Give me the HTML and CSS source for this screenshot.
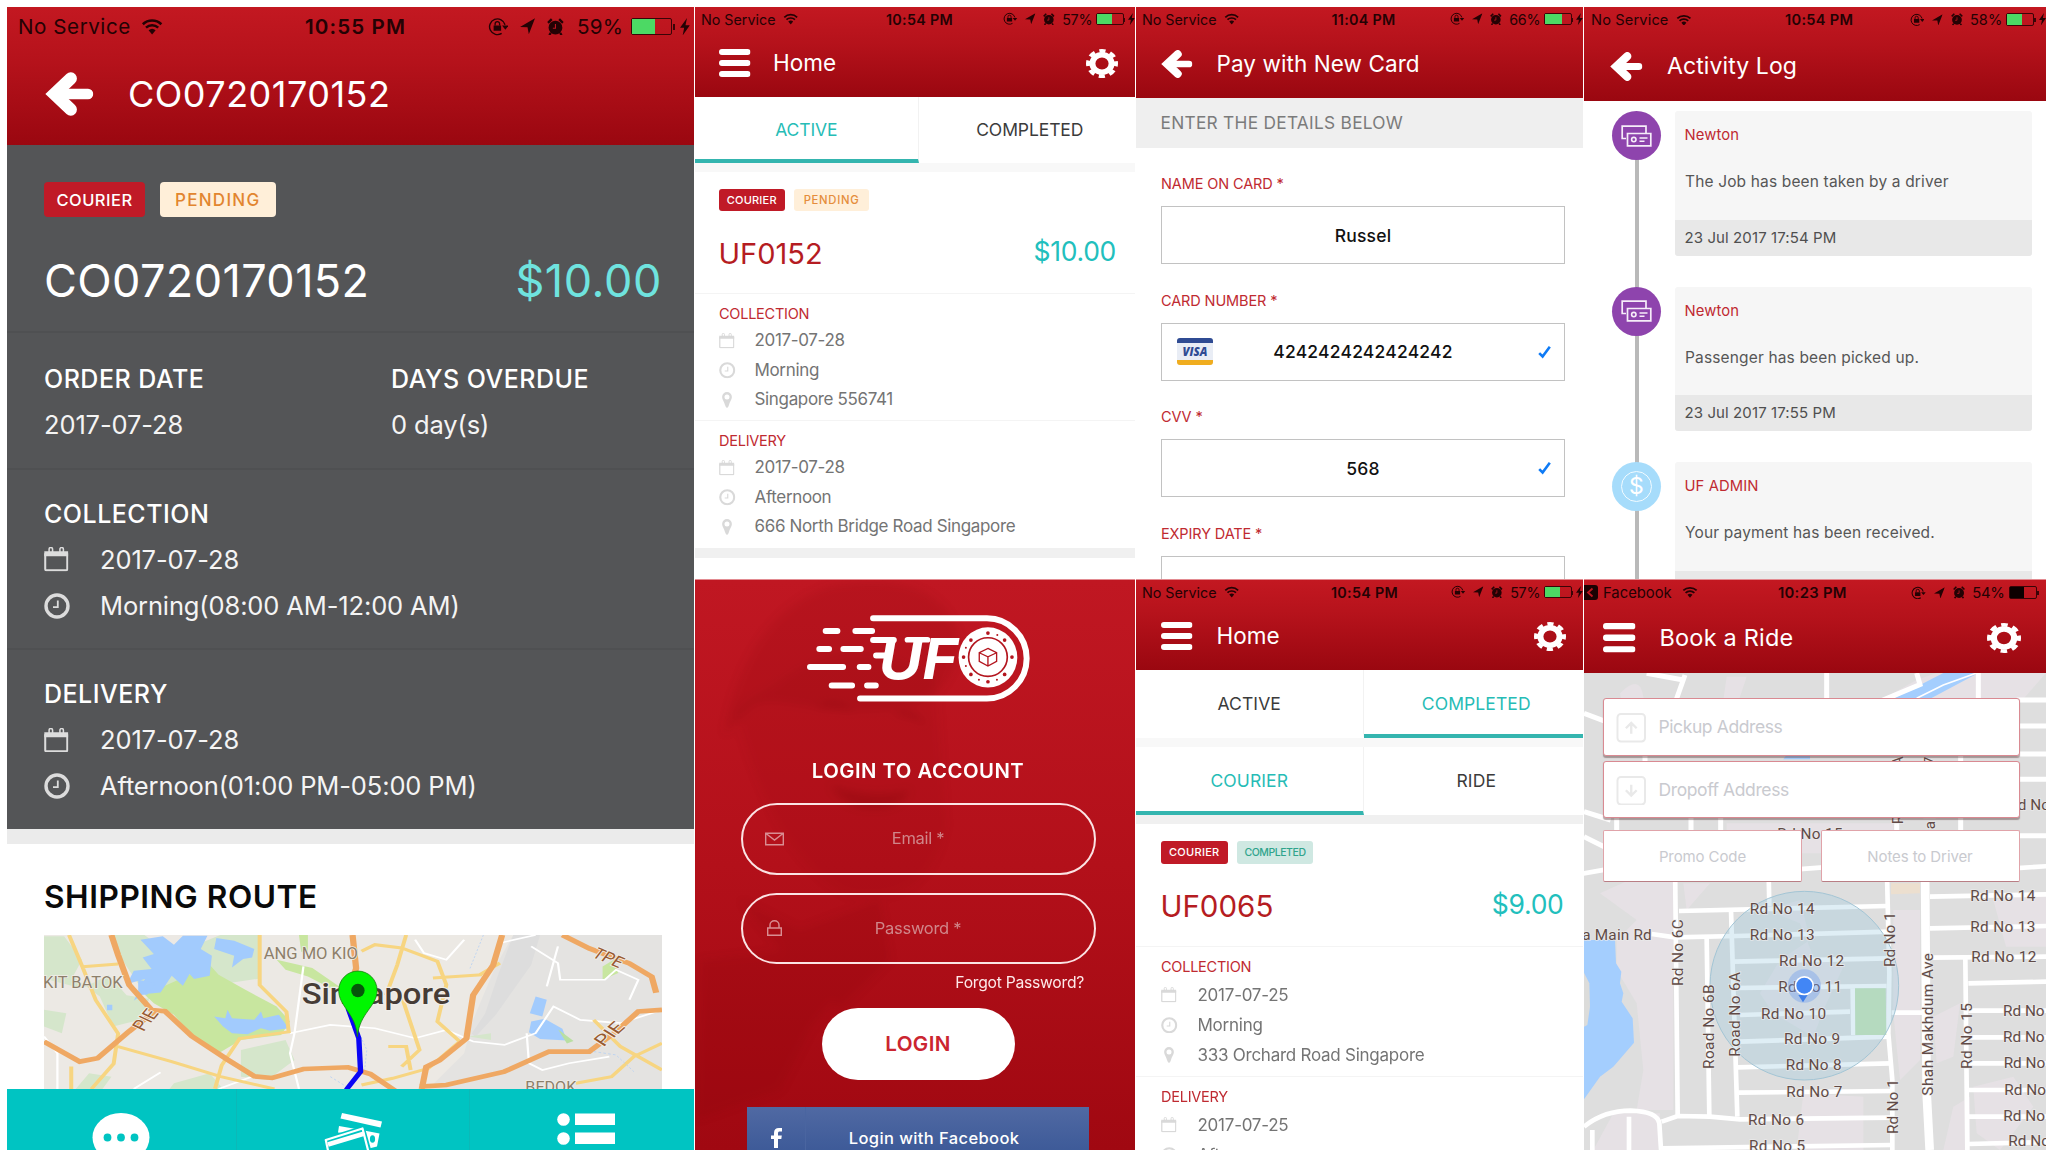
FILE: index.html
```html
<!DOCTYPE html>
<html lang="en">
<head>
<meta charset="utf-8">
<title>UFO Courier</title>
<link rel="stylesheet" href="styles.css">
</head>
<body>
<svg class="sprite" aria-hidden="true">
  <symbol id="wifi" viewBox="0 0 24 18"><path d="M2 6.6a14.5 14.5 0 0 1 20 0M5.4 10.3a9.6 9.6 0 0 1 13.2 0" fill="none" stroke="currentColor" stroke-width="2.7"/><path d="M8.2 13.2a5.6 5.6 0 0 1 7.6 0L12 17.6z" fill="currentColor"/></symbol>
  <symbol id="rotlock" viewBox="0 0 22 20"><path d="M14.6 17.4A8.4 8.4 0 1 1 18.2 8.2" fill="none" stroke="currentColor" stroke-width="1.5"/><path d="M15 9h7l-3.5 4.4z" fill="currentColor"/><path d="M6 9h8v5.6H6z" fill="currentColor"/><path d="M7.6 9V7.2a2.4 2.4 0 0 1 4.8 0V9" fill="none" stroke="currentColor" stroke-width="1.4"/></symbol>
  <symbol id="nav" viewBox="0 0 16 17"><path d="M0 9.4 16 0 9.4 17 8 9.6z" fill="currentColor"/></symbol>
  <symbol id="alarm" viewBox="0 0 18 19"><circle cx="9" cy="10.4" r="7.4" fill="currentColor"/><path d="M1 5.2 5 1.2M17 5.2l-4-4M4 16l-1.6 2.4M14 16l1.6 2.4" stroke="currentColor" stroke-width="2.4"/><path d="M9 6.500v4.500H6.200" fill="none" stroke="#bd1620" stroke-width="1.200"/></symbol>
  <symbol id="bolt" viewBox="0 0 9 16"><path d="M6.4 0 0 9h3.8L2.4 16 9 6.6H5z" fill="currentColor"/></symbol>
  <symbol id="back" viewBox="0 0 49 44" preserveAspectRatio="none"><path d="M26 6.5 9.5 22 26 37.5" fill="none" stroke="currentColor" stroke-width="12.5" stroke-linecap="round"/><path d="M12 22h31.5" stroke="currentColor" stroke-width="10.5" stroke-linecap="round"/></symbol>
  <symbol id="menu" viewBox="0 0 32 28" preserveAspectRatio="none"><path d="M3 3h26M3 14h26M3 25h26" stroke="currentColor" stroke-width="6" stroke-linecap="round"/></symbol>
  <symbol id="gear" viewBox="0 0 32 32" preserveAspectRatio="none"><circle cx="16" cy="16" r="9.6" fill="none" stroke="currentColor" stroke-width="6"/><circle cx="16" cy="16" r="14" fill="none" stroke="currentColor" stroke-width="4" stroke-dasharray="6.2 4.796" stroke-dashoffset="3.1"/></symbol>
  <symbol id="cal" viewBox="0 0 24 24"><path d="M1.2 6v15.8a1 1 0 0 0 1 1h19.6a1 1 0 0 0 1-1V6" fill="none" stroke="currentColor" stroke-width="2"/><path d="M.3 4.2h23.400V9H.3z" fill="currentColor"/><path d="M5 5.500V2.200a1.700 1.700 0 0 1 3.400 0V5.500M15.600 5.500V2.200a1.700 1.700 0 0 1 3.400 0V5.500" fill="none" stroke="currentColor" stroke-width="1.500"/></symbol>
  <symbol id="clock" viewBox="0 0 26 26"><circle cx="13" cy="13" r="11" fill="none" stroke="currentColor" stroke-width="3.4"/><path d="M13.8 7.5v6.6H9" fill="none" stroke="currentColor" stroke-width="1.8"/></symbol>
  <symbol id="pin" viewBox="0 0 20 32"><path d="M10 0a9.7 9.7 0 0 0-9.7 9.8C.3 15 4 18 6 26q2 6 4 6t4-6c2-8 5.700-11 5.700-16.200A9.700 9.700 0 0 0 10 0zm0 5a5 5 0 1 1 0 10 5 5 0 0 1 0-10z" fill="currentColor" fill-rule="evenodd"/></symbol>
  <symbol id="check" viewBox="0 0 13 13"><path d="M1.200 7.600 4.600 11 11.800 1.200" fill="none" stroke="#0f7bf5" stroke-width="2.600"/></symbol>
  <symbol id="cash" viewBox="0 0 31 22"><path d="M5 13.500H1.200V1.200H25V8" fill="none" stroke="currentColor" stroke-width="1.700"/><path d="M6.500 8.500h23.300v12.300H6.500z" fill="none" stroke="currentColor" stroke-width="1.700"/><circle cx="12.800" cy="14.600" r="2.200" fill="none" stroke="currentColor" stroke-width="1.600"/><path d="M18.500 13h8M18.500 16.300h5" stroke="currentColor" stroke-width="1.500"/></symbol>
</svg>

<main class="board">

  <section class="screen detail">
    <header class="bar">
      <div class="status">
        <div class="status-left"><span>No Service</span><svg class="i-wifi"><use href="#wifi"/></svg></div>
        <b>10:55 PM</b>
        <div class="status-right"><svg class="i-rot"><use href="#rotlock"/></svg><svg class="i-nav"><use href="#nav"/></svg><svg class="i-alarm"><use href="#alarm"/></svg><span>59%</span><i class="battery"><i style="width:59%"></i></i><svg class="i-bolt"><use href="#bolt"/></svg></div>
      </div>
      <div class="titlebar"><svg class="lead"><use href="#back"/></svg><h1>CO0720170152</h1></div>
    </header>
    <div class="d-order">
      <div class="tags"><span class="tag red">COURIER</span><span class="tag pending">PENDING</span></div>
      <div class="idrow"><strong>CO0720170152</strong><em>$10.00</em></div>
    </div>
    <div class="d-dates">
      <div><h2>ORDER DATE</h2><p>2017-07-28</p></div>
      <div><h2>DAYS OVERDUE</h2><p>0 day(s)</p></div>
    </div>
    <div class="d-leg">
      <h2>COLLECTION</h2>
      <p><svg class="cal"><use href="#cal"/></svg>2017-07-28</p>
      <p><svg class="clk"><use href="#clock"/></svg>Morning(08:00 AM-12:00 AM)</p>
    </div>
    <div class="d-leg last">
      <h2>DELIVERY</h2>
      <p><svg class="cal"><use href="#cal"/></svg>2017-07-28</p>
      <p><svg class="clk"><use href="#clock"/></svg>Afternoon(01:00 PM-05:00 PM)</p>
    </div>
    <div class="d-route">
      <h2>SHIPPING ROUTE</h2>
      <svg class="routemap" viewBox="99 346 1384 461" preserveAspectRatio="none">
        <rect x="99" y="346" width="1384" height="461" fill="#ece9e4"/>
        <path d="M1150 346H1483V807H960L1040 700 1060 600 1110 440z" fill="#e4e3e1"/>
        <path d="M1150 346h60l-20 90-80 150-45 65-8-10 30-60 30-120z" fill="#dddddd"/>
        <g fill="#d5e6cb"><path d="M99 350h45l40 70-20 50 60 60 30 90 60-20 20-60-60-120-20-74h70l60 60 110-60h90v130l-100 20-110 50-90-20-40-60-60 40-85-30z"/><path d="M540 690l100-30 20 60-60 60-60-10zM390 790l80-30 30 47h-120zM99 570l50 10-10 60-40-20zM1050 650l50-10v20zM200 760l50 10-20 37h-60z"/></g>
        <path d="M325 525 400 480l70-45 20 30 60 45 70 50 30 45-20 40-90 15-50 40-50-40-50-75-45-35z" fill="#c8e69f"/>
        <path d="M620 420 700 445 760 500 740 505 690 470 640 450zM670 346h20v55l-15-5zM1350 440l25-20 10 40-35 20z" fill="#c8e69f"/>
        <g fill="#a2cbfd"><path d="M315 360l50-10 25 25 20-27h55l-15 40 25 20-5 60-35 10-10-15-15 35-25-30-25 50-40 5-20 20 25-65-40 15 15-40 40-5-20-35 25-10z"/><path d="M310 480l40 10-20 35-20 0z"/><path d="M485 355l40 8 45 25-5 25-20 5-25 25 5-35-45-20z"/><path d="M480 590l25 5 5-25 10 25 50 5 15-25 5 20 35-10 22 40-42 8-20-8-30 18-35-3-20-20z"/><path d="M1200 530l25 10-10 50-28-10zM1190 605l30-8 40 30 10 35-60-5-25-20zM240 555h12v16h-12z"/><path d="M1250 628l35 35-15 8z" fill="#b9dfa2"/></g>
        <g fill="none" stroke="#fff" stroke-width="5"><path d="M650 640 740 615 840 625 930 655 1000 630 1060 665 1130 675 1200 640 1240 560 1300 600 1390 610 1483 570M680 440l-20 200-10 60 20 107M930 360l20 40 50 20 40-60M1190 380l60 50 5 50h100l25-30 50 30-20 60M1180 640l5 90 30 20 60-20 90-20M99 650l30 50v107M300 807l60-50M490 807l80-40M1225 500l25-120M1120 370l80-24"/></g>
        <g fill="none" stroke="#f7d581" stroke-width="9"><path d="M155 346l30 95 30 100 50 100-10 90-50 76M185 441l80-8M582 346v150l60 80 5 60-110 20-40 80-15 70M265 680l120 45 110 45 120 37M910 346l-20 90-25 90M810 395l30-20 60 10 80 40 20 70-20 110 50 60-70 80-80 30-70 20M970 475l110-10M870 680h40l10 70M900 530l40 160-40 50M1330 600l60 80 93 70M1290 790l80-20 50-60 63-40M160 740v67M1120 430l-45 35"/></g>
        <g fill="none" stroke="#efa863" stroke-width="14"><path d="M250 346l15 60 25 90 50 75 30 3 60 75 80 70 60 50 40 5 70-27 100-5 50 20 55 50M99 665l80 60 40-10 70-80 60-63M790 346l8 100-20 80M1125 346l-20 90-45 90-15 130-60 65-30 20-10 66M940 800l60-5 130-40 100-60h90l60-60 50-60 53-5M1260 346l60 40 90 45 50 40 10 48"/></g>
        <g fill="none" stroke="#b4cff3" stroke-width="2" stroke-dasharray="6 5"><path d="M1083 346l-30 100M808 650l14 40-5 60M740 770l45 37M1330 695l50 10 40 50"/></g>
        <g font-family="Roboto, sans-serif" fill="#8d7f6a" stroke="#f0ede8" stroke-width="5" paint-order="stroke">
          <text x="591" y="417" font-size="48" textLength="211" lengthAdjust="spacingAndGlyphs">ANG MO KIO</text>
          <text x="97" y="504" font-size="48" textLength="178" lengthAdjust="spacingAndGlyphs">KIT BATOK</text>
          <text x="1177" y="817" font-size="46" textLength="114" lengthAdjust="spacingAndGlyphs">BEDOK</text>
          <g fill="#985a30"><text font-size="46" textLength="66" lengthAdjust="spacingAndGlyphs" transform="translate(322 636) rotate(-58)">PIE</text><text font-size="46" textLength="78" lengthAdjust="spacingAndGlyphs" transform="translate(1352 682) rotate(-50)">PIE</text><text font-size="46" textLength="72" lengthAdjust="spacingAndGlyphs" transform="translate(1324 410) rotate(30)">TPE</text></g>
          <text x="676" y="554" font-size="86" font-weight="500" textLength="333" lengthAdjust="spacingAndGlyphs" fill="#463c36" stroke-width="7">Singapore</text>
        </g>
        <path d="M780 565l24 90 4 100-32 54" fill="none" stroke="#0a05f5" stroke-width="12"/>
        <path d="M801 650c-4-70-42-90-42-138a43 58 0 0 1 86 0c0 48-40 68-44 138z" fill="#00f600" stroke="#1b7a12" stroke-width="2"/>
        <ellipse cx="802" cy="512" rx="15" ry="20" fill="#06560a"/>
      </svg>
    </div>
    <nav class="d-actions">
      <a><svg viewBox="0 0 58 48"><ellipse cx="29" cy="24.500" rx="28.500" ry="24.500" fill="#fff"/><g fill="#00c4c2"><circle cx="15.500" cy="24.500" r="3.900"/><circle cx="29" cy="24.500" r="3.900"/><circle cx="42.500" cy="24.500" r="3.900"/></g></svg></a>
      <a><svg viewBox="0 0 58 48"><path d="M18 0 58 8.500 56.500 14.500 16.500 5.500z" fill="#fff"/><path d="M15 13l20 3.500 20.500 4-2.500 13-8 2-10-14-21-2z" fill="#fff"/><ellipse cx="48.500" cy="26" rx="2.600" ry="3.800" fill="#00c4c2"/><path d="M1.500 27 38.500 15.500 46 42 7 52z" fill="#00c4c2" stroke="#00c4c2" stroke-width="5"/><path d="M1.800 27 38.500 15.500 45 41 7 52z" fill="#00c4c2" stroke="#fff" stroke-width="2.200" stroke-linejoin="round"/><path d="M4 31.500 40.500 20.500" stroke="#fff" stroke-width="4.500"/></svg></a>
      <a><svg viewBox="0 0 58 48"><g fill="#fff"><circle cx="6.500" cy="6.500" r="6.300"/><circle cx="6.500" cy="25.500" r="6.300"/><path d="M18 .500h40v11.500H18zM18 19.500h40V31H18z"/></g></svg></a>
    </nav>
  </section>

  <section class="screen home">
    <header class="bar">
      <div class="status">
        <div class="status-left"><span>No Service</span><svg class="i-wifi"><use href="#wifi"/></svg></div>
        <b>10:54 PM</b>
        <div class="status-right"><svg class="i-rot"><use href="#rotlock"/></svg><svg class="i-nav"><use href="#nav"/></svg><svg class="i-alarm"><use href="#alarm"/></svg><span>57%</span><i class="battery"><i style="width:57%"></i></i><svg class="i-bolt"><use href="#bolt"/></svg></div>
      </div>
      <div class="titlebar"><svg class="lead"><use href="#menu"/></svg><h1>Home</h1><svg class="cog"><use href="#gear"/></svg></div>
    </header>
    <div class="tabs"><a class="on">ACTIVE</a><a>COMPLETED</a></div>
    <div class="strip light"></div>
    <div class="tags"><span class="tag red">COURIER</span><span class="tag pending">PENDING</span></div>
    <div class="idrow"><strong>UF0152</strong><em>$10.00</em></div>
    <div class="leg">
      <h3>COLLECTION</h3>
      <p><svg class="cal"><use href="#cal"/></svg>2017-07-28</p>
      <p><svg class="clk"><use href="#clock"/></svg>Morning</p>
      <p><svg class="pin"><use href="#pin"/></svg>Singapore 556741</p>
    </div>
    <div class="leg">
      <h3>DELIVERY</h3>
      <p><svg class="cal"><use href="#cal"/></svg>2017-07-28</p>
      <p><svg class="clk"><use href="#clock"/></svg>Afternoon</p>
      <p><svg class="pin"><use href="#pin"/></svg>666 North Bridge Road Singapore</p>
    </div>
    <div class="strip"></div>
  </section>

  <section class="screen pay">
    <header class="bar">
      <div class="status">
        <div class="status-left"><span>No Service</span><svg class="i-wifi"><use href="#wifi"/></svg></div>
        <b>11:04 PM</b>
        <div class="status-right"><svg class="i-rot"><use href="#rotlock"/></svg><svg class="i-nav"><use href="#nav"/></svg><svg class="i-alarm"><use href="#alarm"/></svg><span>66%</span><i class="battery"><i style="width:66%"></i></i><svg class="i-bolt"><use href="#bolt"/></svg></div>
      </div>
      <div class="titlebar"><svg class="lead"><use href="#back"/></svg><h1>Pay with New Card</h1></div>
    </header>
    <div class="intro">ENTER THE DETAILS BELOW</div>
    <div class="form">
      <label>NAME ON CARD *</label>
      <div class="field"><span>Russel</span></div>
      <label>CARD NUMBER *</label>
      <div class="field">
        <svg class="visa" viewBox="0 0 36 27"><rect width="36" height="27" rx="3" fill="#e9edf5"/><path d="M0 5V3a3 3 0 0 1 3-3h30a3 3 0 0 1 3 3v2z" fill="#2f4b93"/><path d="M0 22v2a3 3 0 0 0 3 3h30a3 3 0 0 0 3-3v-2z" fill="#f0ad1f"/><text x="5.500" y="17.800" font-size="12" font-weight="800" font-style="italic" font-family="Open Sans, sans-serif" fill="#2f4b93" textLength="25" lengthAdjust="spacingAndGlyphs">VISA</text></svg>
        <span>4242424242424242</span><svg class="ok"><use href="#check"/></svg>
      </div>
      <label>CVV *</label>
      <div class="field"><span>568</span><svg class="ok"><use href="#check"/></svg></div>
      <label>EXPIRY DATE *</label>
      <div class="field"></div>
    </div>
  </section>

  <section class="screen log">
    <header class="bar">
      <div class="status">
        <div class="status-left"><span>No Service</span><svg class="i-wifi"><use href="#wifi"/></svg></div>
        <b>10:54 PM</b>
        <div class="status-right"><svg class="i-rot"><use href="#rotlock"/></svg><svg class="i-nav"><use href="#nav"/></svg><svg class="i-alarm"><use href="#alarm"/></svg><span>58%</span><i class="battery"><i style="width:58%"></i></i><svg class="i-bolt"><use href="#bolt"/></svg></div>
      </div>
      <div class="titlebar"><svg class="lead"><use href="#back"/></svg><h1>Activity Log</h1></div>
    </header>
    <div class="timeline">
      <article><div class="dot"><svg><use href="#cash"/></svg></div><div class="entry"><h3>Newton</h3><p>The Job has been taken by a driver</p><footer>23 Jul 2017 17:54 PM</footer></div></article>
      <article><div class="dot"><svg><use href="#cash"/></svg></div><div class="entry"><h3>Newton</h3><p>Passenger has been picked up.</p><footer>23 Jul 2017 17:55 PM</footer></div></article>
      <article><div class="dot blue"><span>$</span></div><div class="entry"><h3>UF ADMIN</h3><p>Your payment has been received.</p><footer></footer></div></article>
    </div>
  </section>

  <section class="screen login">
    <svg class="backdrop" viewBox="695 580 440 570" preserveAspectRatio="none">
      <defs><filter id="soft"><feGaussianBlur stdDeviation="4"/></filter></defs>
      <g filter="url(#soft)" fill="#6e0008">
        <path d="M724 735c10-60 40-130 110-150 60-10 110 0 125 50 0 40-20 70-70 75-80 8-120-20-140 0z" opacity=".10"/>
        <path d="M726 735c10-40 30-35 60-60 60-40 110-20 150 0l10 150c-10 60-50 80-100 70-60-30-90-110-110-180z" opacity=".07"/>
        <path d="M815 708q20-14 40 4-20-7-40-4zM892 715q20-12 36 12-16-12-36-12zM830 785q40 15 80 5-10 20-40 18-25 0-40-23z" opacity=".22"/>
        <path d="M700 960l90-10 60 30-40 50-30 60-85 30zM740 900l60 30 80-30 10 60-50 50-60-60z" opacity=".10"/>
      </g>
    </svg>
    <svg class="logo" viewBox="351 120 668 262">
      <g fill="none" stroke="#fff" stroke-width="18" stroke-linecap="round"><path d="M549 130H890A119 120 0 0 1 890 370H510"/><path d="M407 168h35M496 168h50M388 222h29M460 222h52M360 276h99M509 276h26M425 331h61M531 331h26M549 195h62M558 241h30"/></g>
      <text x="566" y="311" font-family="Inter, sans-serif" font-weight="700" font-style="italic" font-size="170" fill="#fff" textLength="236" lengthAdjust="spacingAndGlyphs">UF</text>
      <path d="M652 194h60" stroke="#fff" stroke-width="17" stroke-linecap="round"/>
      <ellipse cx="893" cy="247" rx="88" ry="90" fill="#fff"/>
      <g fill="none" stroke="#b3151e"><circle cx="893" cy="246" r="58" stroke-width="5"/><path d="M893 220l26 13v26l-26 14-26-14v-26zM867 233l26 12 26-12M893 245v28" stroke-width="4"/></g>
      <g fill="#b3151e"><circle cx="893" cy="174" r="5.500"/><circle cx="893" cy="320" r="5.500"/><circle cx="820" cy="246" r="5.500"/><circle cx="965" cy="246" r="5.500"/><circle cx="842" cy="195" r="5.500"/><circle cx="943" cy="195" r="5.500"/><circle cx="842" cy="298" r="5.500"/><circle cx="943" cy="298" r="5.500"/><circle cx="921" cy="180" r="3"/><circle cx="827" cy="218" r="3"/><circle cx="827" cy="273" r="3"/><circle cx="866" cy="314" r="3"/><circle cx="920" cy="314" r="3"/></g>
    </svg>
    <h2>LOGIN TO ACCOUNT</h2>
    <div class="pill"><svg viewBox="0 0 19 13"><path d="M.700.700h17.600v11.600H.700zM.700.700l8.800 6.800L18.300.700" fill="none" stroke="currentColor" stroke-width="1.400"/></svg><span>Email *</span></div>
    <div class="pill"><svg viewBox="-2 0 19 16"><path d="M.700 8h13.600v7.200H.700zM3 8V5a4.500 4.300 0 0 1 9 0v3" fill="none" stroke="currentColor" stroke-width="1.400"/></svg><span>Password *</span></div>
    <a class="forgot">Forgot Password?</a>
    <a class="submit">LOGIN</a>
    <a class="fb"><svg viewBox="0 0 11 20"><path d="M3 20V11H0V7.500h3V5C3 1.800 4.800 0 7.800 0H11v3.500H8.800c-1.300 0-1.800.6-1.800 1.700v2.300h3.800L10.300 11H7v9z" fill="#fff"/></svg><span>Login with Facebook</span></a>
  </section>

  <section class="screen home done">
    <header class="bar">
      <div class="status">
        <div class="status-left"><span>No Service</span><svg class="i-wifi"><use href="#wifi"/></svg></div>
        <b>10:54 PM</b>
        <div class="status-right"><svg class="i-rot"><use href="#rotlock"/></svg><svg class="i-nav"><use href="#nav"/></svg><svg class="i-alarm"><use href="#alarm"/></svg><span>57%</span><i class="battery"><i style="width:57%"></i></i><svg class="i-bolt"><use href="#bolt"/></svg></div>
      </div>
      <div class="titlebar"><svg class="lead"><use href="#menu"/></svg><h1>Home</h1><svg class="cog"><use href="#gear"/></svg></div>
    </header>
    <div class="tabs"><a>ACTIVE</a><a class="on">COMPLETED</a></div>
    <div class="strip light"></div>
    <div class="tabs"><a class="on">COURIER</a><a>RIDE</a></div>
    <div class="strip"></div>
    <div class="tags"><span class="tag red">COURIER</span><span class="tag completed">COMPLETED</span></div>
    <div class="idrow"><strong>UF0065</strong><em>$9.00</em></div>
    <div class="leg">
      <h3>COLLECTION</h3>
      <p><svg class="cal"><use href="#cal"/></svg>2017-07-25</p>
      <p><svg class="clk"><use href="#clock"/></svg>Morning</p>
      <p><svg class="pin"><use href="#pin"/></svg>333 Orchard Road Singapore</p>
    </div>
    <div class="leg">
      <h3>DELIVERY</h3>
      <p><svg class="cal"><use href="#cal"/></svg>2017-07-25</p>
      <p><svg class="clk"><use href="#clock"/></svg>Afternoon</p>
    </div>
  </section>

  <section class="screen ride">
    <header class="bar">
      <div class="status">
        <div class="status-left"><svg class="chip" viewBox="0 0 14 15"><path d="M0 0h11a3 3 0 0 1 3 3v9a3 3 0 0 1-3 3H0z" fill="#1a0203"/><path d="M8.500 3.500 4 7.500l4.500 4" fill="none" stroke="#bd1620" stroke-width="1.800"/></svg><span>Facebook</span><svg class="i-wifi"><use href="#wifi"/></svg></div>
        <b>10:23 PM</b>
        <div class="status-right"><svg class="i-rot"><use href="#rotlock"/></svg><svg class="i-nav"><use href="#nav"/></svg><svg class="i-alarm"><use href="#alarm"/></svg><span>54%</span><i class="battery plain"><i style="width:54%"></i></i></div>
      </div>
      <div class="titlebar"><svg class="lead"><use href="#menu"/></svg><h1>Book a Ride</h1><svg class="cog"><use href="#gear"/></svg></div>
    </header>
    <div class="mapwrap">
      <svg class="citymap" viewBox="12 -561 1386 1431" preserveAspectRatio="none">
        <rect x="12" y="-561" width="1386" height="1431" fill="#dedede"/>
        <g fill="#e6e1e5"><path d="M170 50h110v700H170l20-120-20-200-60-100V240L170 180 60 100zM310 70h80l-70 80zM560 150l100-30 30 120-90 60-60 100 40 60 120 70 30-80 60-130-90-30-40-100zM670 700l180 10v160H650zM940 150h80v450l-60 60-20-200zM1240 120l158-20v160h-120zM1180 680l120-30 60 90-100 130-70-50zM1060 470l80-40-20 160-50 20zM1120 740l50-30v160h-80zM120 -500q60-60 70 10t-60 50zM440 -550h60l-30 90-40-20zM920 -490l90-50 60-21h328l-70 80H920zM440 -110h500v90H440zM100 760h140l-5 110H40z"/></g>
        <path d="M12 240h93l3 70 16 25-4 35 10 30-5 25 33 50 4 73-62 72-40 30-48 68z" fill="#a4cefe"/>
        <path d="M12 338l16 32 2 70-8 55-10 5z" fill="#dcdcda"/>
        <path d="M940-484l150-77h105l-150 80zM610-302h80v-14h-70z" fill="#a4cefe"/>
        <path d="M1010-485l80-40 100-36" fill="none" stroke="#fff" stroke-width="5"/>
        <path d="M933 70h87v30l-87 3z" fill="#ecdfcf"/>
        <g fill="none" stroke="#fff" stroke-width="14">
          <path d="M285 0l8 765M380 235l8 535M453 150l19 620M565 0l3 138M920 0l8 340-3 180 12 140v210M1156 295l6 575M818 385l2 140"/>
          <path d="M297 153l623-15M215 222l70 10 185-4 460-13M460 305l465-10M470 384l450-6M480 465l330-10M935 458h100M480 545l445-15M472 622l458-12M475 698l460-5M245 785l48-17 97 2 90 8 455-5M245 865l690-10"/>
          <path d="M1050 110l350-7M1050 205l350-7M1050 293l350-3M1165 370l235-5M1165 452h235M1165 532h235M1165 610h235M1165 690h235M1165 770h235M1165 852l235-6"/>
          <path d="M12 800q60-48 140-48 80 2 86 38l5 80M37 810v60M147 770v100M0 42l80-14M650 28l80-6M1300 25l110-7"/>
          <path d="M315-555l-32 90M200-560l110 20M740-561v90M1010-561l10 35-120 50M1195-561v90M1310-480h90M1310-402h90M1310-318h90M1310-242h90M1310-73h90M12-440l80 30M12-145l80 25M12-70l80 40M110-150v80M333-150v80M422-150v80M950-150v80M1142-320v250M195-320v30" stroke-width="15"/>
          <path d="M1035 0l5 700 9 170" stroke-width="26"/>
        </g>
        <path d="M825 385h92l2 140h-93z" fill="#c1e2b0"/>
        <circle cx="673" cy="377" r="283" fill="#9bcbe0" fill-opacity=".32" stroke="#a3c5d5" stroke-width="3"/>
        <g font-family="Roboto, sans-serif" font-size="46" fill="#614b47" stroke="#ececec" stroke-width="5" stroke-opacity=".8" paint-order="stroke">
          <text x="509" y="162" textLength="195">Rd No 14</text><text x="509" y="241" textLength="195">Rd No 13</text><text x="597" y="317" textLength="195">Rd No 12</text><text x="595" y="397" textLength="191">Rd No 11</text><text x="543" y="476" textLength="195">Rd No 10</text><text x="612" y="553" textLength="168">Rd No 9</text><text x="617" y="631" textLength="168">Rd No 8</text><text x="619" y="712" textLength="168">Rd No 7</text><text x="504" y="794" textLength="168">Rd No 6</text><text x="507" y="873" textLength="168">Rd No 5</text>
          <text x="1171" y="124" textLength="195">Rd No 14</text><text x="1171" y="217" textLength="195">Rd No 13</text><text x="1174" y="307" textLength="195">Rd No 12</text>
          <text x="1269" y="467">Rd No</text><text x="1269" y="547">Rd No</text><text x="1271" y="625">Rd No</text><text x="1273" y="705">Rd No</text><text x="1270" y="784">Rd No</text><text x="1285" y="859">Rd No</text>
          <text x="7" y="239" textLength="208">a Main Rd</text><text x="592" y="-63" textLength="196">Rd No 15</text><text x="1285" y="-150">Rd No</text>
          <text transform="translate(308 378) rotate(-90)" textLength="200">Rd No 6C</text>
          <text transform="translate(401 627) rotate(-90)" textLength="254">Road No 6B</text>
          <text transform="translate(481 590) rotate(-90)" textLength="254">Road No 6A</text>
          <text transform="translate(944 321) rotate(-90)" textLength="165">Rd No 1</text>
          <text transform="translate(953 822) rotate(-90)" textLength="165">Rd No 1</text>
          <text transform="translate(1060 707) rotate(-90)" textLength="428">Shah Makhdum Ave</text>
          <text transform="translate(1176 627) rotate(-90)" textLength="198">Rd No 15</text>
          <text transform="translate(968 -107) rotate(-90)" textLength="204">Road No 7A</text>
          <text transform="translate(1065 -92) rotate(-90)" textLength="218">a Road No 7</text>
        </g>
        <circle cx="673" cy="378" r="50" fill="#6d9cf0" fill-opacity=".38"/>
        <path d="M655 405h28l-14 22z" fill="#3f7fe8"/>
        <circle cx="673" cy="377" r="29" fill="#fff"/><circle cx="673" cy="377" r="24" fill="#4286f5"/>
      </svg>
      <div class="overlay">
        <div class="addr"><svg viewBox="0 0 30 30"><rect x="1" y="1" width="28" height="28" rx="3.500" fill="none" stroke="currentColor" stroke-width="2"/><path d="M15 21V10.500M9.500 15.500 15 10l5.500 5.500" fill="none" stroke="currentColor" stroke-width="2.400"/></svg>Pickup Address</div>
        <div class="addr"><svg viewBox="0 0 30 30"><rect x="1" y="1" width="28" height="28" rx="3.500" fill="none" stroke="currentColor" stroke-width="2"/><path d="M15 9v10.500M9.500 14.500 15 20l5.500-5.500" fill="none" stroke="currentColor" stroke-width="2.400"/></svg>Dropoff Address</div>
        <div class="extras"><div>Promo Code</div><div>Notes to Driver</div></div>
      </div>
    </div>
  </section>

</main>
</body>
</html>
```
FILE: styles.css
```css
* { box-sizing: border-box; margin: 0; padding: 0; }
body { background: #fff; font-family: Inter, "Liberation Sans", sans-serif; overflow: hidden; }
svg { display: block; flex: none; }
.sprite { position: absolute; width: 0; height: 0; }
h1, h2, h3, em, i { font-weight: 400; font-style: normal; }

.board {
  width: 2048px; height: 1152px; padding: 7px 0 0 7px;
  display: grid; grid-template: 572px 571px / 687px 440px 447px 462px; column-gap: 1px;
}
.screen { overflow: hidden; background: #fff; position: relative; min-width: 0; min-height: 0; }
.detail { grid-row: span 2; }
.login, .done, .ride { border-top: 1px solid #e38b91; }

/* header shared by every screen */
.bar { background: linear-gradient(#c31821, #b5121b 40%, #9a0710); height: 90px; color: #fff; }
.status {
  height: 24px; color: #240204; font-size: 14.3px;
  display: grid; grid-template-columns: 191px auto 1fr; align-items: center; white-space: nowrap;
}
.status-left { display: flex; align-items: center; gap: .5em; padding-left: 6px; }
.status b { font-weight: 600; letter-spacing: .3px; }
.status-right { display: flex; align-items: center; justify-content: flex-end; }
.status-right > * { flex: none; }
.status-right span { letter-spacing: -.3px; }
.i-wifi { width: 1.08em; height: .82em; }
.i-rot { width: 1em; height: .92em; margin-right: .54em; }
.i-nav { width: .73em; height: .8em; margin-right: .53em; }
.i-alarm { width: .82em; height: .86em; margin-right: .5em; }
.i-bolt { width: .48em; height: .85em; margin-left: .32em; }
.battery {
  width: 1.92em; height: .84em; border: 1px solid #3a0407; border-radius: 2px;
  margin-left: .28em; display: block; position: relative;
}
.battery i { display: block; height: 100%; background: #4cd964; }
.battery::after { content: ""; position: absolute; right: -.17em; top: .27em; width: .1em; height: .26em; background: #3a0407; }
.battery.plain i { background: #0c0000; }
.titlebar { height: 64px; display: flex; align-items: center; padding: 0 17.500px 0 24px; }
.titlebar h1 { font-size: 22.500px; margin-left: 22.500px; white-space: nowrap; padding-bottom: 1px; }
.lead { width: 31.500px; height: 28px; }
.cog { width: 32px; height: 29px; margin-left: auto; }

/* tags */
.tags { display: flex; }
.tag { display: flex; align-items: center; justify-content: center; border-radius: 3px; font-weight: 500; white-space: nowrap; }
.tag.red { background: #c01a27; color: #fff; }
.tag.pending { background: #ffefd9; color: #e58d3c; }
.tag.completed { background: #cfe8e2; color: #2fa48c; }

/* order detail */
.detail { background: #545557; color: #f4f4f4; display: flex; flex-direction: column; height: 1143px; }
.detail .bar { height: 138px; flex: none; }
.detail .status { height: 39px; font-size: 20.600px; grid-template-columns: 298px auto 1fr; padding-right: 4px; }
.detail .status-left { padding-left: 11px; letter-spacing: .55px; gap: .5em; }
.detail .status b { letter-spacing: 1.100px; }
.detail .status .i-rot { margin-right: .57em; }
.detail .status .i-nav { margin-right: .6em; }
.detail .status .i-alarm { margin-right: .62em; }
.detail .status .i-bolt { margin-left: .38em; }
.detail .status-right span { letter-spacing: .3px; }
.detail .battery { margin-left: .36em; width: 2.02em; }
.detail .titlebar { height: 96px; padding-left: 38px; }
.detail .lead { width: 48.500px; height: 44px; }
.detail .titlebar h1 { font-size: 36px; letter-spacing: .49px; margin-left: 34.500px; padding: 0; }
.d-order { height: 188px; padding: 37px 32px 0 37px; border-bottom: 2px solid #4f5052; flex: none; }
.d-order .tags { gap: 14.500px; height: 35px; }
.d-order .tag { width: 101px; font-size: 16.500px; letter-spacing: .48px; border-radius: 4px; }
.d-order .tag.pending { width: 116.500px; letter-spacing: 1.300px; font-size: 17px; color: #e2852f; }
.d-order .idrow { height: 105px; margin-top: 11px; display: flex; align-items: center; justify-content: space-between; padding: 0; }
.d-order .idrow strong { font-size: 45px; font-weight: 400; letter-spacing: .4px; color: #fff; }
.d-order .idrow em { font-size: 45px; font-weight: 400; letter-spacing: .6px; color: #6fe3df; margin: 0; }
.d-dates { height: 137px; padding: 23px 0 0 37px; display: grid; grid-template-columns: 347px 1fr; border-bottom: 2px solid #4f5052; flex: none; }
.detail h2 { font-size: 25px; font-weight: 530; letter-spacing: .5px; line-height: 46px; color: #fff; }
.detail p { font-size: 25.500px; line-height: 46px; letter-spacing: -.13px; display: flex; align-items: center; white-space: nowrap; }
.d-leg { height: 180px; padding: 20.500px 0 0 37px; border-bottom: 2px solid #4f5052; flex: none; }
.d-leg.last { height: 179px; padding-top: 21px; border: 0; }
.d-leg svg { width: 24.500px; height: 24.500px; margin-right: 31.500px; color: #dcdcdc; }
.d-leg svg.clk { width: 26px; height: 26px; margin-right: 30px; }
.d-route { border-top: 15px solid #ebebeb; background: #fff; height: 260px; padding: 15px 31px 0 37px; flex: none; }
.detail .d-route h2 { color: #0a0a0a; font-size: 31.600px; line-height: 76px; height: 76px; font-weight: 600; letter-spacing: .54px; }
.routemap { width: 618px; height: 154px; }
.d-actions { height: 61px; background: #00c4c2; display: grid; grid-template-columns: 230px 233px 1fr; flex: none; overflow: hidden; }
.d-actions a { padding: 24px 0 0 85px; border-right: 1px solid #0bb9b8; }
.d-actions a + a { padding-left: 87px; }
.d-actions a + a + a { padding-left: 87px; border: 0; }
.d-actions svg { width: 58px; height: 48px; }

/* job list */
.tabs { height: 66px; display: grid; grid-template-columns: 223.500px 1fr; font-size: 17.500px; color: #3b3b3b; }
.tabs a { display: flex; align-items: center; justify-content: center; border-right: 1px solid #f2f2f2; padding-top: 3px; border-bottom: 4px solid transparent; letter-spacing: -.1px; }
.tabs a:last-child { border-right: 0; padding-left: 6px; }
.tabs a.on { color: #26bcb6; border-bottom-color: #34b5af; }
.strip { height: 10px; background: #f0f0f0; }
.strip.light { height: 9px; background: #f8f8f8; }
.home .tags { gap: 9.500px; padding: 17px 0 0 24px; }
.home .tag { width: 65.500px; height: 22px; font-size: 11px; letter-spacing: .2px; }
.home .tag.pending { width: 75px; letter-spacing: .7px; font-size: 11.300px; }
.home .tag.completed { width: 76px; font-size: 10.500px; letter-spacing: -.45px; }
.home .idrow { height: 82px; padding: 3px 19px 0 23.500px; display: flex; align-items: center; justify-content: space-between; }
.home .idrow strong { font-size: 29px; font-weight: 400; color: #b51c22; }
.home .idrow em { font-size: 26.500px; color: #22bfbd; margin-top: -5px; letter-spacing: -.3px; }
.leg { height: 127px; border-top: 1.500px solid #f4f4f4; padding: 7px 0 0 24px; }
.leg h3 { font-size: 14.500px; line-height: 25px; letter-spacing: -.25px; color: #bf2a31; }
.leg p { font-size: 17px; line-height: 29.700px; height: 29.700px; letter-spacing: -.34px; color: #747474; display: flex; align-items: center; white-space: nowrap; }
.leg svg { color: #d9d9d9; width: 15.500px; height: 15.500px; margin-right: 20px; }
.leg svg.clk { width: 16.500px; height: 16.500px; margin-right: 19px; }
.leg svg.pin { width: 10px; height: 16px; margin: 0 22.500px 0 3px; }
.leg + .leg { height: 128px; }
.done .status { grid-template-columns: 195px auto 1fr; }
.done .titlebar { height: 64px; }
.done .tabs { height: 68px; grid-template-columns: 227.500px 1fr; }
.done .tabs a { letter-spacing: .1px; }
.done .strip { height: 9px; }
.done .tags { padding-left: 25px; }
.done .tag { height: 22.500px; width: 66.500px; letter-spacing: .3px; }
.done .idrow { padding: 3px 19.500px 0 24.500px; height: 82.500px; }
.done .idrow strong { font-size: 29.500px; }
.done .idrow em { margin-top: -4px; }
.done .leg { height: 130px; padding-left: 25px; }
.done .leg h3 { line-height: 26px; }
.done .leg p { height: 30px; line-height: 30px; letter-spacing: -.25px; }
.done .leg svg { margin-right: 21px; }
.done .leg svg.clk { margin-right: 20px; }
.done .leg svg.pin { margin-right: 23.500px; }

/* card form */
.pay .bar { height: 91px; }
.pay .status { grid-template-columns: 195.500px auto 1fr; }
.pay .titlebar, .done .titlebar { padding-left: 25px; }
.pay .titlebar { height: 65px; }
.pay h1 { letter-spacing: .08px; }
.pay h1, .done h1 { margin-left: 24px; }
.intro { height: 50px; line-height: 50px; background: #efefef; color: #7b7b7b; font-size: 17.300px; letter-spacing: .28px; padding-left: 24.500px; }
.form { padding: 15px 18px 0 25px; }
.form label { display: block; height: 43px; line-height: 42px; font-size: 14.500px; letter-spacing: -.12px; color: #c02a31; }
.field { height: 58px; border: 1.500px solid #c2c2c2; margin-bottom: 15.600px; display: grid; grid-template-columns: 50px 1fr 50px; align-items: center; }
.field span { grid-column: 2; grid-row: 1; text-align: center; font-size: 17.500px; font-weight: 500; letter-spacing: .2px; color: #111; }
.visa { width: 36px; height: 27px; margin-left: 14.500px; grid-column: 1; grid-row: 1; }
.ok { width: 13px; height: 14px; grid-column: 3; grid-row: 1; margin-left: 24px; }

/* activity log */
.log .bar { height: 94px; }
.log .status { height: 25px; font-size: 14.600px; grid-template-columns: 201px auto 1fr; }
.log .status-left { letter-spacing: .15px; padding-left: 7px; }
.log .status-right span { letter-spacing: 0; }
.log .titlebar { height: 68px; padding-left: 26px; }
.log .lead { width: 32.500px; height: 29px; }
.log h1 { font-size: 23px; margin-left: 24.500px; letter-spacing: .1px; }
.timeline { padding: 10px 14px 0 28px; position: relative; }
.timeline::before { content: ""; position: absolute; left: 50.500px; top: 30px; bottom: 0; width: 4px; background: #b9b9b9; }
.timeline article { display: grid; grid-template-columns: 49px 1fr; column-gap: 14px; height: 175.500px; position: relative; }
.dot { width: 49px; height: 49px; border-radius: 50%; background: #8e44ad; color: #f6edf9; display: flex; align-items: center; justify-content: center; }
.dot svg { width: 31px; height: 22px; }
.dot.blue { background: #a6dcfb; }
.dot.blue span { width: 31px; height: 31px; border: 1.600px solid #f2fbff; border-radius: 50%; font: 400 23px/28px Inter, sans-serif; text-align: center; color: #fff; }
.entry { height: 144.700px; border-radius: 3px; background: #f6f6f6; overflow: hidden; }
.entry h3 { font-size: 14.800px; line-height: 48px; height: 47px; padding-left: 9.500px; color: #c02a31; letter-spacing: .1px; }
.entry p { font-size: 15.500px; line-height: 48px; height: 61.500px; padding-left: 10px; letter-spacing: .15px; color: #565656; white-space: nowrap; }
.entry footer { background: #e8e8e8; height: 37px; line-height: 36px; font-size: 15px; letter-spacing: .1px; padding-left: 9.500px; color: #4f4f4f; }

/* login */
.login { background: linear-gradient(#c01722, #b3101a 50%, #a00811); display: flex; flex-direction: column; align-items: center; }
.login > * { position: relative; flex: none; }
.login .backdrop { position: absolute; left: 0; top: 0; width: 440px; height: 570px; }
.logo { width: 223px; height: 87.500px; margin: 35px 0 0 6px; }
.login h2 { color: #fff; font-size: 20.300px; font-weight: 600; letter-spacing: .5px; line-height: 30px; margin: 53.500px 0 17px 6px; }
.pill { width: 355px; height: 71.500px; border: 2.500px solid #fbe3e4; border-radius: 36px; margin: 0 0 18px 6px; display: grid; grid-template-columns: 60px 1fr 60px; align-items: center; color: #d98d92; }
.pill svg { width: 19px; height: 16px; margin-left: 22.500px; }
.pill span { text-align: center; font-size: 16.500px; letter-spacing: -.3px; color: #d0868a; padding-bottom: 1px; }
.forgot { font-size: 15.700px; letter-spacing: -.26px; color: #fde9e9; align-self: flex-end; margin: -9px 51px 0 0; line-height: 20px; height: 35px; }
.submit { width: 193px; height: 71.500px; border-radius: 36px; background: #fff; color: #cb2530; font-size: 20.600px; font-weight: 600; letter-spacing: .4px; line-height: 71px; text-align: center; margin-left: 6px; }
.fb { width: 342.500px; height: 64px; margin: 27px 0 0 6px; background: linear-gradient(#5069a3, #3d5a98 70%); display: grid; grid-template-columns: 58px 1fr; color: #fff; }
.fb svg { width: 11px; height: 20px; margin: 21px 0 0 24.500px; }
.fb span { border-left: 1px solid #4a65a0; font-size: 16.500px; font-weight: 500; letter-spacing: .4px; line-height: 62px; padding-left: 43px; }

/* ride booking */
.ride .bar { height: 93px; }
.ride .status { height: 25px; font-size: 14.800px; grid-template-columns: 194px auto 1fr; padding-right: 9px; }
.ride .status-left { padding: 0; gap: 5px; }
.ride .status .i-wifi { margin-left: 5px; }
.chip { width: 14px; height: 15px; }
.ride .titlebar { height: 66px; padding: 0 25px 0 19px; }
.ride .lead { width: 32.500px; height: 29.500px; }
.ride h1 { font-size: 23.500px; margin-left: 24px; letter-spacing: .2px; }
.ride .cog { width: 34px; height: 30px; }
.mapwrap { position: relative; height: 477px; }
.citymap { width: 462px; height: 477px; }
.overlay { position: absolute; left: 19px; top: 25px; width: 416.500px; color: #c9cacf; }
.addr { height: 57.500px; margin-bottom: 5px; background: #fff; border: 1px solid #d98a92; border-radius: 3px; box-shadow: 0 1.500px 1px rgba(90, 60, 60, .45); display: flex; align-items: center; font-size: 17.500px; letter-spacing: -.4px; }
.addr svg { width: 30.500px; height: 29.500px; margin: 2px 12.500px 0 11.500px; color: #e9e9e9; }
.extras { display: grid; grid-template-columns: 199px 199px; justify-content: space-between; margin-top: 12px; }
.extras div { height: 52px; line-height: 51px; background: #fff; border: 1px solid #e0a3a9; border-bottom: 1.500px solid #b97e85; border-radius: 2px; text-align: center; font-size: 15px; letter-spacing: -.1px; }
```
